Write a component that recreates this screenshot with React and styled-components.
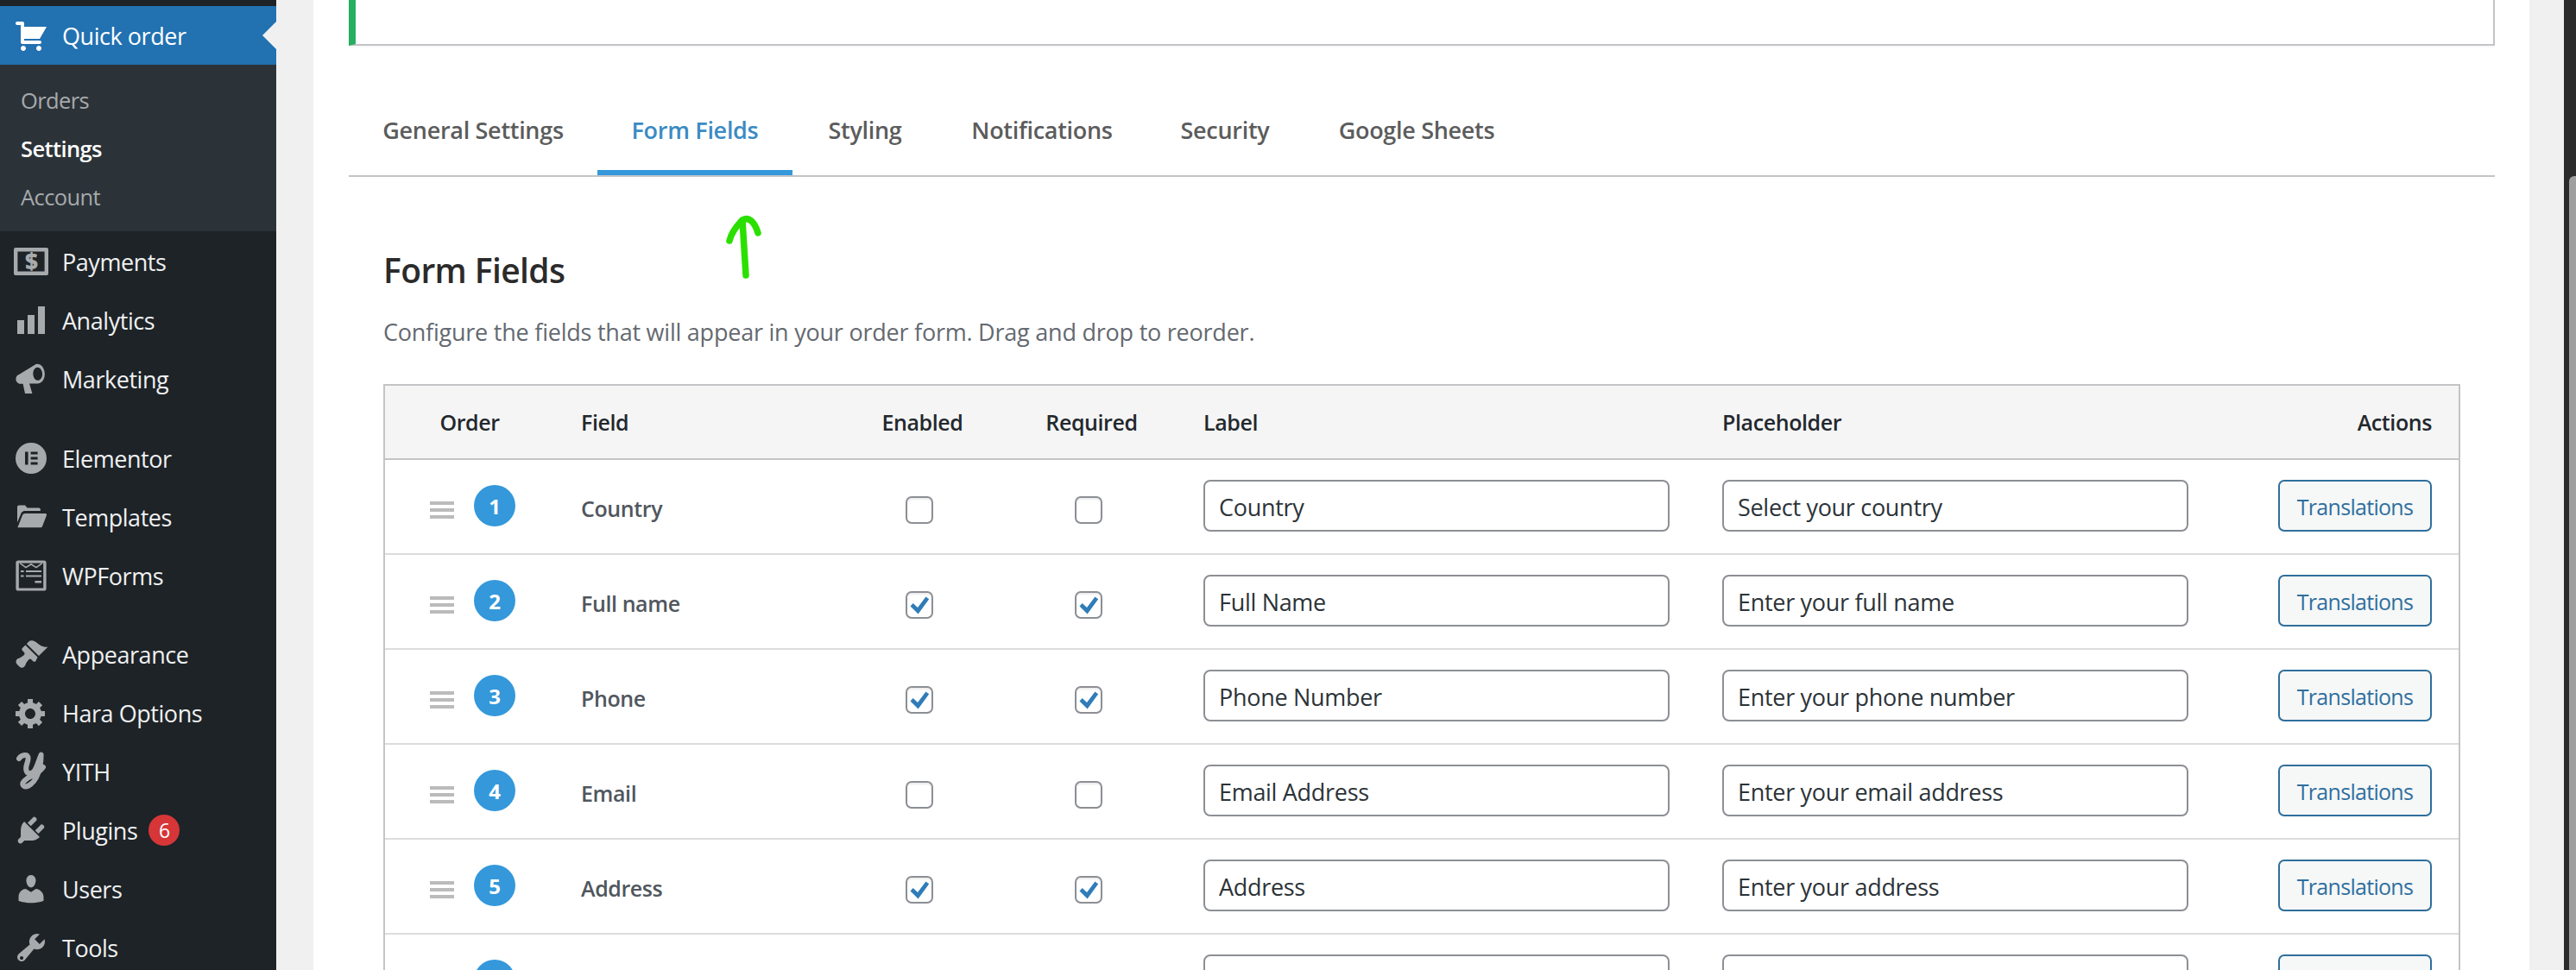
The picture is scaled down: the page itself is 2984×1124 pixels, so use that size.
import React from "react";
import styled, { createGlobalStyle } from "styled-components";

const Global = createGlobalStyle`
  html, body { margin: 0; padding: 0; background: #f0f0f1; }
  body { font-family: "Open Sans", "Noto Sans", sans-serif; overflow: hidden; }
  * { box-sizing: border-box; }
`;

const Page = styled.div`
  display: flex;
  width: 2984px;
  height: 1124px;
  overflow: hidden;
  background: #f0f0f1;
`;

/* ---------- Admin sidebar ---------- */
const Sidebar = styled.nav`
  width: 320px;
  flex: none;
  height: 1124px;
  overflow: hidden;
  padding-top: 7px;
  background: #1d2327;
  color: #f0f0f1;
`;
const MenuItem = styled.div`
  position: relative;
  display: flex;
  align-items: center;
  height: 68px;
  padding-left: 16px;
  gap: 16px;
  font-size: 27px;
  letter-spacing: -0.45px;
  margin-top: ${(p) => (p.$gap ? `${p.$gap}px` : 0)};
  background: ${(p) => (p.$active ? "#2271b1" : "transparent")};
  color: ${(p) => (p.$active ? "#fff" : "#f0f0f1")};
  svg.icon { width: 40px; height: 40px; flex: none; overflow: visible; fill: ${(p) => (p.$active ? "#fff" : "#a7aaad")}; }
`;
const Notch = styled.span`
  position: absolute;
  right: 0;
  top: 18px;
  width: 0;
  height: 0;
  border-top: 16px solid transparent;
  border-bottom: 16px solid transparent;
  border-right: 16px solid #f0f0f1;
`;
const SubMenu = styled.div`
  background: #2c3338;
  padding: 13px 0 12px;
  margin-bottom: 1px;
`;
const SubItem = styled.div`
  display: flex;
  align-items: center;
  height: 56px;
  padding-left: 24px;
  font-size: 25.5px;
  letter-spacing: -0.6px;
  font-weight: ${(p) => (p.$current ? 600 : 400)};
  color: ${(p) => (p.$current ? "#fff" : "#a7aaad")};
`;
const Count = styled.span`
  display: flex;
  align-items: center;
  justify-content: center;
  width: 36px;
  height: 36px;
  margin-left: -3px;
  border-radius: 50%;
  background: #d63638;
  color: #fff;
  font-size: 23px;
`;

/* ---------- Main column ---------- */
const Main = styled.main`
  flex: 1;
  display: flex;
  padding: 0 14px 0 43px;
  min-width: 0;
  background: #f0f0f1;
`;
const Panel = styled.div`
  width: 2567px;
  flex: none;
  height: 1124px;
  overflow: hidden;
  background: #fff;
  padding: 0 40px 0 41px;
`;
const Notice = styled.div`
  height: 53px;
  background: #fff;
  border: 2px solid #c3c4c7;
  border-top: 0;
  border-left: 8px solid #27ae60;
  box-shadow: 0 2px 2px rgba(0, 0, 0, 0.03);
`;
const Tabs = styled.div`
  display: flex;
  margin-top: 44px;
  border-bottom: 2px solid #c3c4c7;
`;
const Tab = styled.div`
  display: flex;
  align-items: center;
  justify-content: center;
  width: ${(p) => p.$width}px;
  height: 106px;
  font-size: 27px;
  letter-spacing: -0.3px;
  font-weight: 600;
  color: ${(p) => (p.$active ? "#3a8bc4" : "#5c5c5c")};
  box-shadow: ${(p) => (p.$active ? "inset 0 -6px 0 #3498db" : "none")};
`;
const Content = styled.section`
  position: relative;
  padding: 83px 0 0 40px;
`;
const Title = styled.h2`
  margin: 0;
  font-size: 39px;
  line-height: 50px;
  letter-spacing: -0.6px;
  font-weight: 600;
  color: #2b2b2b;
`;
const Description = styled.p`
  margin: 22px 0 0;
  font-size: 27px;
  line-height: 50px;
  letter-spacing: -0.23px;
  color: #646970;
`;
const Arrow = styled.svg`
  position: absolute;
  left: 434px;
  top: 40px;
  width: 50px;
  height: 84px;
`;

/* ---------- Fields table ---------- */
const Table = styled.div`
  margin-top: 35px;
  width: 2406px;
  border: 2px solid #c3c4c7;
  border-bottom: 0;
  font-size: 25px;
`;
const columns = "195px 329px 196px 196px 601px 605px 280px";
const HeadRow = styled.div`
  display: grid;
  grid-template-columns: ${columns};
  height: 86px;
  background: #f5f5f5;
  border-bottom: 2px solid #c3c4c7;
`;
const HeadCell = styled.div`
  display: flex;
  align-items: center;
  justify-content: ${(p) => p.$justify || "flex-start"};
  padding: 0 31px 0 32px;
  font-size: 25px;
  letter-spacing: -0.4px;
  font-weight: 600;
  color: #23282d;
`;
const Row = styled.div`
  display: grid;
  grid-template-columns: ${columns};
  height: 110px;
  border-bottom: 2px solid #dcdcde;
`;
const Cell = styled.div`
  display: flex;
  align-items: center;
  justify-content: ${(p) => p.$justify || "flex-start"};
  padding: 0 31px 0 32px;
`;
const OrderCell = styled.div`
  display: flex;
  align-items: center;
  padding-left: 52px;
  gap: 23px;
`;
const Handle = styled.span`
  display: flex;
  flex-direction: column;
  gap: 4px;
  width: 28px;
  margin-top: 8px;
  i { display: block; height: 4px; background: #bbb; }
`;
const Badge = styled.span`
  display: flex;
  align-items: center;
  justify-content: center;
  width: 48px;
  height: 48px;
  margin-top: -2px;
  border-radius: 50%;
  background: #3498db;
  color: #fff;
  font-size: 24px;
  font-weight: 700;
`;
const FieldName = styled.span`
  margin-top: 3px;
  font-size: 25px;
  letter-spacing: -0.4px;
  font-weight: 600;
  color: #50575e;
`;
const CheckBox = styled.span`
  display: flex;
  align-items: center;
  justify-content: center;
  width: 32px;
  height: 32px;
  margin: 8px 8px 0 0;
  border: 2px solid #8c8f94;
  border-radius: 7px;
  background: #fff;
  box-shadow: inset 0 2px 2px rgba(0, 0, 0, 0.08);
  svg { width: 28px; height: 28px; flex: none; fill: #2f7cb8; }
`;
const TextField = styled.input`
  flex: none;
  width: 540px;
  height: 60px;
  margin-top: -2px;
  padding: 3px 16px 0 16px;
  border: 2px solid #8c8f94;
  border-radius: 8px;
  background: #fff;
  outline: 0;
  font-family: inherit;
  font-size: 27px;
  letter-spacing: -0.3px;
  color: #2c3338;
`;
const TransButton = styled.button`
  flex: none;
  width: 178px;
  height: 60px;
  margin-top: -2px;
  padding: 2px 0 0;
  border: 2px solid #2f6f9c;
  border-radius: 7px;
  background: #f6f7f7;
  font-family: inherit;
  font-size: 25px;
  letter-spacing: -0.7px;
  color: #2f6f9f;
`;

/* ---------- Right gutter ---------- */
const Scrollbar = styled.div`
  position: absolute;
  right: 0;
  top: 0;
  width: 14px;
  height: 1124px;
  background: #2b2b2b;
`;
const Thumb = styled.div`
  position: absolute;
  right: 0;
  top: 204px;
  width: 8px;
  height: 920px;
  border-top-left-radius: 6px;
  background: #9f9f9f;
`;

const Icon = ({ children }) => (
  <svg className="icon" viewBox="0 0 20 20">
    {children}
  </svg>
);

const icons = {
  cart: <path d="M6 13h9c.55 0 1 .45 1 1s-.45 1-1 1H5c-.55 0-1-.45-1-1V4H2c-.55 0-1-.45-1-1s.45-1 1-1h3c.55 0 1 .45 1 1v2h13l-4 7H6v1zm-.5 3c.83 0 1.5.67 1.5 1.5S6.33 19 5.5 19 4 18.33 4 17.5 4.67 16 5.500 16zm9 0c.83 0 1.500.67 1.500 1.500s-.67 1.500-1.500 1.500-1.500-.67-1.500-1.500.67-1.500 1.500-1.500z" />,
  money: (
    <>
      <path fillRule="evenodd" d="M1 2h18a1 1 0 0 1 1 1v14a1 1 0 0 1-1 1H1a1 1 0 0 1-1-1V3a1 1 0 0 1 1-1zm1.200 2.200v11.600h15.600V4.200z" />
      <text x="10" y="14.600" textAnchor="middle" fontSize="13" fontWeight="800" fontFamily="Open Sans, sans-serif" fill="#a7aaad">$</text>
    </>
  ),
  chart: <path d="M18 18V2h-4v16h4zm-6 0V7H8v11h4zm-6 0v-8H2v8h4z" />,
  megaphone: <path fillRule="evenodd" d="M12.800 1.500c2.600-.6 4.900 1.900 5.100 5.300.2 3.200-1.500 5.800-3.900 5.900H9l1.700 5.800H6.500L5.300 12.900H4c-1.600 0-2.800-1.300-2.800-2.800 0-1.300.8-2.300 2-2.700zm.7 1.900c-1.500.2-2.500 2-2.300 4.100.2 2.100 1.500 3.600 3 3.400 1.500-.2 2.500-2 2.300-4.100-.2-2.100-1.500-3.600-3-3.400z" />,
  elementor: <path fillRule="evenodd" d="M10 1a9 9 0 1 0 0 18 9 9 0 0 0 0-18zM6.500 6.300h1.800v7.400H6.500zm3.300 0h4v1.500h-4zm0 2.950h4v1.500h-4zm0 2.950h4v1.500h-4z" />,
  folder: <path d="M2 3.200h4.500l1.300 1.500h6.700c.5 0 .9.400.9.900v.9H6.300c-.9 0-1.600.5-2 1.300l-2.300 5.400V4.200c0-.6.400-1 1-1zM6.500 8h11.800c.6 0 .9.500.7 1l-2.500 6.500c-.2.400-.5.600-.9.600H2.200L5 9c.3-.6.800-1 1.500-1z" />,
  wpforms: (
    <>
      <path fillRule="evenodd" d="M2.500 1.200h15c.8 0 1.300.5 1.300 1.300v15c0 .8-.5 1.300-1.300 1.300h-15c-.8 0-1.300-.5-1.300-1.300v-15c0-.8.500-1.300 1.300-1.300zm.4 1.500v14.600h14.200V2.700z" />
      <path d="M4 7h1.800v1H4zm3 0h9v1H7zM4 9.800h1.800v1H4zm3 0h9v1H7zM12.200 13H16v1.200h-3.800z" />
      <path fill="none" stroke="#a7aaad" strokeWidth=".8" d="M3.600 2.800 7 5.300 10 3.400l3 1.900 3.400-2.500" />
    </>
  ),
  brush: <path d="M14.480 11.060L7.410 3.990l1.500-1.500c.5-.56 2.300-.47 3.510.32 1.210.8 1.430 1.280 2.910 2.100 1.180.64 2.450 1.260 4.450.85zm-.71.71L6.700 4.700 4.930 6.470c-.39.39-.39 1.020 0 1.410l1.060 1.060c.39.39.39 1.030 0 1.420-.6.6-1.430 1.270-2.210 1.590-.8.33-1.410.51-1.940 1.040-.79.79-.79 2.040 0 2.830l1.420 1.410c.79.79 2.040.79 2.830 0 .53-.53.72-1.150 1.040-1.940.33-.78 1-1.610 1.590-2.210.39-.39 1.030-.39 1.420 0l1.060 1.060c.39.39 1.020.39 1.410 0z" />,
  gear: <path d="M18 12h-2.180c-.17.7-.44 1.350-.81 1.930l1.540 1.540-2.100 2.100-1.540-1.540c-.58.36-1.230.64-1.910.81V19H8v-2.180c-.68-.17-1.330-.45-1.910-.81l-1.540 1.540-2.120-2.120 1.540-1.540c-.36-.58-.64-1.230-.81-1.910H1V9.030h2.170c.17-.7.44-1.350.81-1.930L2.440 5.560l2.120-2.120L6.100 4.980c.58-.36 1.230-.64 1.910-.81V2h3v2.180c.68.17 1.330.45 1.910.81l1.540-1.540 2.120 2.120L15.040 7.100c.36.58.64 1.230.81 1.910H18V12zm-8.500 1.500c1.660 0 3-1.340 3-3s-1.340-3-3-3-3 1.340-3 3 1.340 3 3 3z" />,
  yith: <path fill="none" stroke="#a7aaad" strokeWidth="3" strokeLinecap="round" strokeLinejoin="round" d="M3 2.500C4.500.3 8.500-.5 8.300 2.500 8.200 5 6.500 7 7.200 9.300c.6 2.200 3.300 2.500 4.800.2C13.500 7.300 14.600 3 15.800.3c0 4.700-1 9.700-2.800 13.200-1.500 3-5 6-7 5-2.500-1.500 1-4.500 4.500-6 2.500-1 5-3 6.500-5" />,
  plug: <path d="M13.110 4.360L9.870 7.600 8 5.730l3.240-3.240c.35-.34 1.050-.2 1.560.32.52.51.66 1.210.31 1.550zm-8 1.770l.91-1.120 9.010 9.010-1.190.84c-.71.71-2.630 1.160-3.820 1.160H6.140L4.900 17.260c-.59.59-1.540.59-2.120 0-.59-.58-.59-1.530 0-2.120l1.240-1.240v-3.880c0-1.130.52-3.130 1.090-3.890zm7.260 3.970l3.240-3.240c.34-.35 1.040-.21 1.550.31.52.51.66 1.210.31 1.550l-3.240 3.250z" />,
  user: <path d="M10 9.250c-2.270 0-2.730-3.440-2.730-3.440C7 4.020 7.820 2 9.970 2c2.160 0 2.980 2.020 2.710 3.810 0 0-.46 3.440-2.680 3.440zm0 2.570L12.720 10c2.390 0 4.520 2.330 4.520 4.530v2.490s-3.650 1.130-7.240 1.130c-3.650 0-7.240-1.130-7.240-1.130v-2.490c0-2.250 1.940-4.480 4.150-4.480z" />,
  wrench: <path d="M16.680 9.770c-1.340 1.340-3.300 1.670-4.950.99l-5.410 6.520c-.99.99-2.590.99-3.570 0-.99-.98-.99-2.580 0-3.570l6.520-5.420c-.68-1.650-.35-3.610.99-4.950 1.280-1.280 3.120-1.620 4.720-1.060l-2.890 2.890 2.820 2.820 2.860-2.870c.53 1.580.18 3.390-1.090 4.670zM3.810 16.740c.4.4 1.050.4 1.440 0 .4-.4.4-1.050 0-1.440-.4-.4-1.050-.4-1.440 0-.4.39-.4 1.040 0 1.440z" />,
};

const menu = [
  { label: "Payments", icon: "money" },
  { label: "Analytics", icon: "chart" },
  { label: "Marketing", icon: "megaphone" },
  { label: "Elementor", icon: "elementor", gap: 24 },
  { label: "Templates", icon: "folder" },
  { label: "WPForms", icon: "wpforms" },
  { label: "Appearance", icon: "brush", gap: 23 },
  { label: "Hara Options", icon: "gear" },
  { label: "YITH", icon: "yith" },
  { label: "Plugins", icon: "plug", count: 6 },
  { label: "Users", icon: "user" },
  { label: "Tools", icon: "wrench" },
];

const tabs = [
  { label: "General Settings", width: 288 },
  { label: "Form Fields", width: 226 },
  { label: "Styling", width: 168 },
  { label: "Notifications", width: 242 },
  { label: "Security", width: 182 },
  { label: "Google Sheets", width: 262 },
];

const rows = [
  { n: 1, name: "Country", on: false, label: "Country", ph: "Select your country" },
  { n: 2, name: "Full name", on: true, label: "Full Name", ph: "Enter your full name" },
  { n: 3, name: "Phone", on: true, label: "Phone Number", ph: "Enter your phone number" },
  { n: 4, name: "Email", on: false, label: "Email Address", ph: "Enter your email address" },
  { n: 5, name: "Address", on: true, label: "Address", ph: "Enter your address" },
  { n: 6, name: "", on: true, label: "", ph: "" },
];

const Check = ({ on }) => (
  <CheckBox>
    {on && (
      <svg viewBox="0 0 20 20">
        <path d="M15.300 3.300 18 5.200 9 17.500 2.500 11l2.300-2.400 3.800 3.600z" />
      </svg>
    )}
  </CheckBox>
);

export default function App() {
  return (
    <Page>
      <Global />
      <Sidebar>
        <MenuItem $active>
          <Icon>{icons.cart}</Icon>
          <span>Quick order</span>
          <Notch />
        </MenuItem>
        <SubMenu>
          <SubItem>Orders</SubItem>
          <SubItem $current>Settings</SubItem>
          <SubItem>Account</SubItem>
        </SubMenu>
        {menu.map((m) => (
          <MenuItem key={m.label} $gap={m.gap}>
            <Icon>{icons[m.icon]}</Icon>
            <span>{m.label}</span>
            {m.count && <Count>{m.count}</Count>}
          </MenuItem>
        ))}
      </Sidebar>
      <Main>
        <Panel>
          <Notice />
          <Tabs>
            {tabs.map((t) => (
              <Tab key={t.label} $width={t.width} $active={t.label === "Form Fields"}>
                {t.label}
              </Tab>
            ))}
          </Tabs>
          <Content>
            <Arrow viewBox="0 0 50 84">
              <path
                d="M26 74 L22 10 M22 10 C15 17 9 25 7 34 M22 10 C30 5 37 14 40 25"
                fill="none"
                stroke="#2be000"
                strokeWidth="7.500"
                strokeLinecap="round"
                strokeLinejoin="round"
              />
            </Arrow>
            <Title>Form Fields</Title>
            <Description>Configure the fields that will appear in your order form. Drag and drop to reorder.</Description>
            <Table>
              <HeadRow>
                <HeadCell $justify="center">Order</HeadCell>
                <HeadCell>Field</HeadCell>
                <HeadCell $justify="center">Enabled</HeadCell>
                <HeadCell $justify="center">Required</HeadCell>
                <HeadCell>Label</HeadCell>
                <HeadCell>Placeholder</HeadCell>
                <HeadCell $justify="flex-end">Actions</HeadCell>
              </HeadRow>
              {rows.map((r) => (
                <Row key={r.n}>
                  <OrderCell>
                    <Handle>
                      <i />
                      <i />
                      <i />
                    </Handle>
                    <Badge>{r.n}</Badge>
                  </OrderCell>
                  <Cell>
                    <FieldName>{r.name}</FieldName>
                  </Cell>
                  <Cell $justify="center">
                    <Check on={r.on} />
                  </Cell>
                  <Cell $justify="center">
                    <Check on={r.on} />
                  </Cell>
                  <Cell>
                    <TextField defaultValue={r.label} />
                  </Cell>
                  <Cell>
                    <TextField defaultValue={r.ph} />
                  </Cell>
                  <Cell $justify="flex-end">
                    <TransButton>Translations</TransButton>
                  </Cell>
                </Row>
              ))}
            </Table>
          </Content>
        </Panel>
        <Scrollbar>
          <Thumb />
        </Scrollbar>
      </Main>
    </Page>
  );
}
